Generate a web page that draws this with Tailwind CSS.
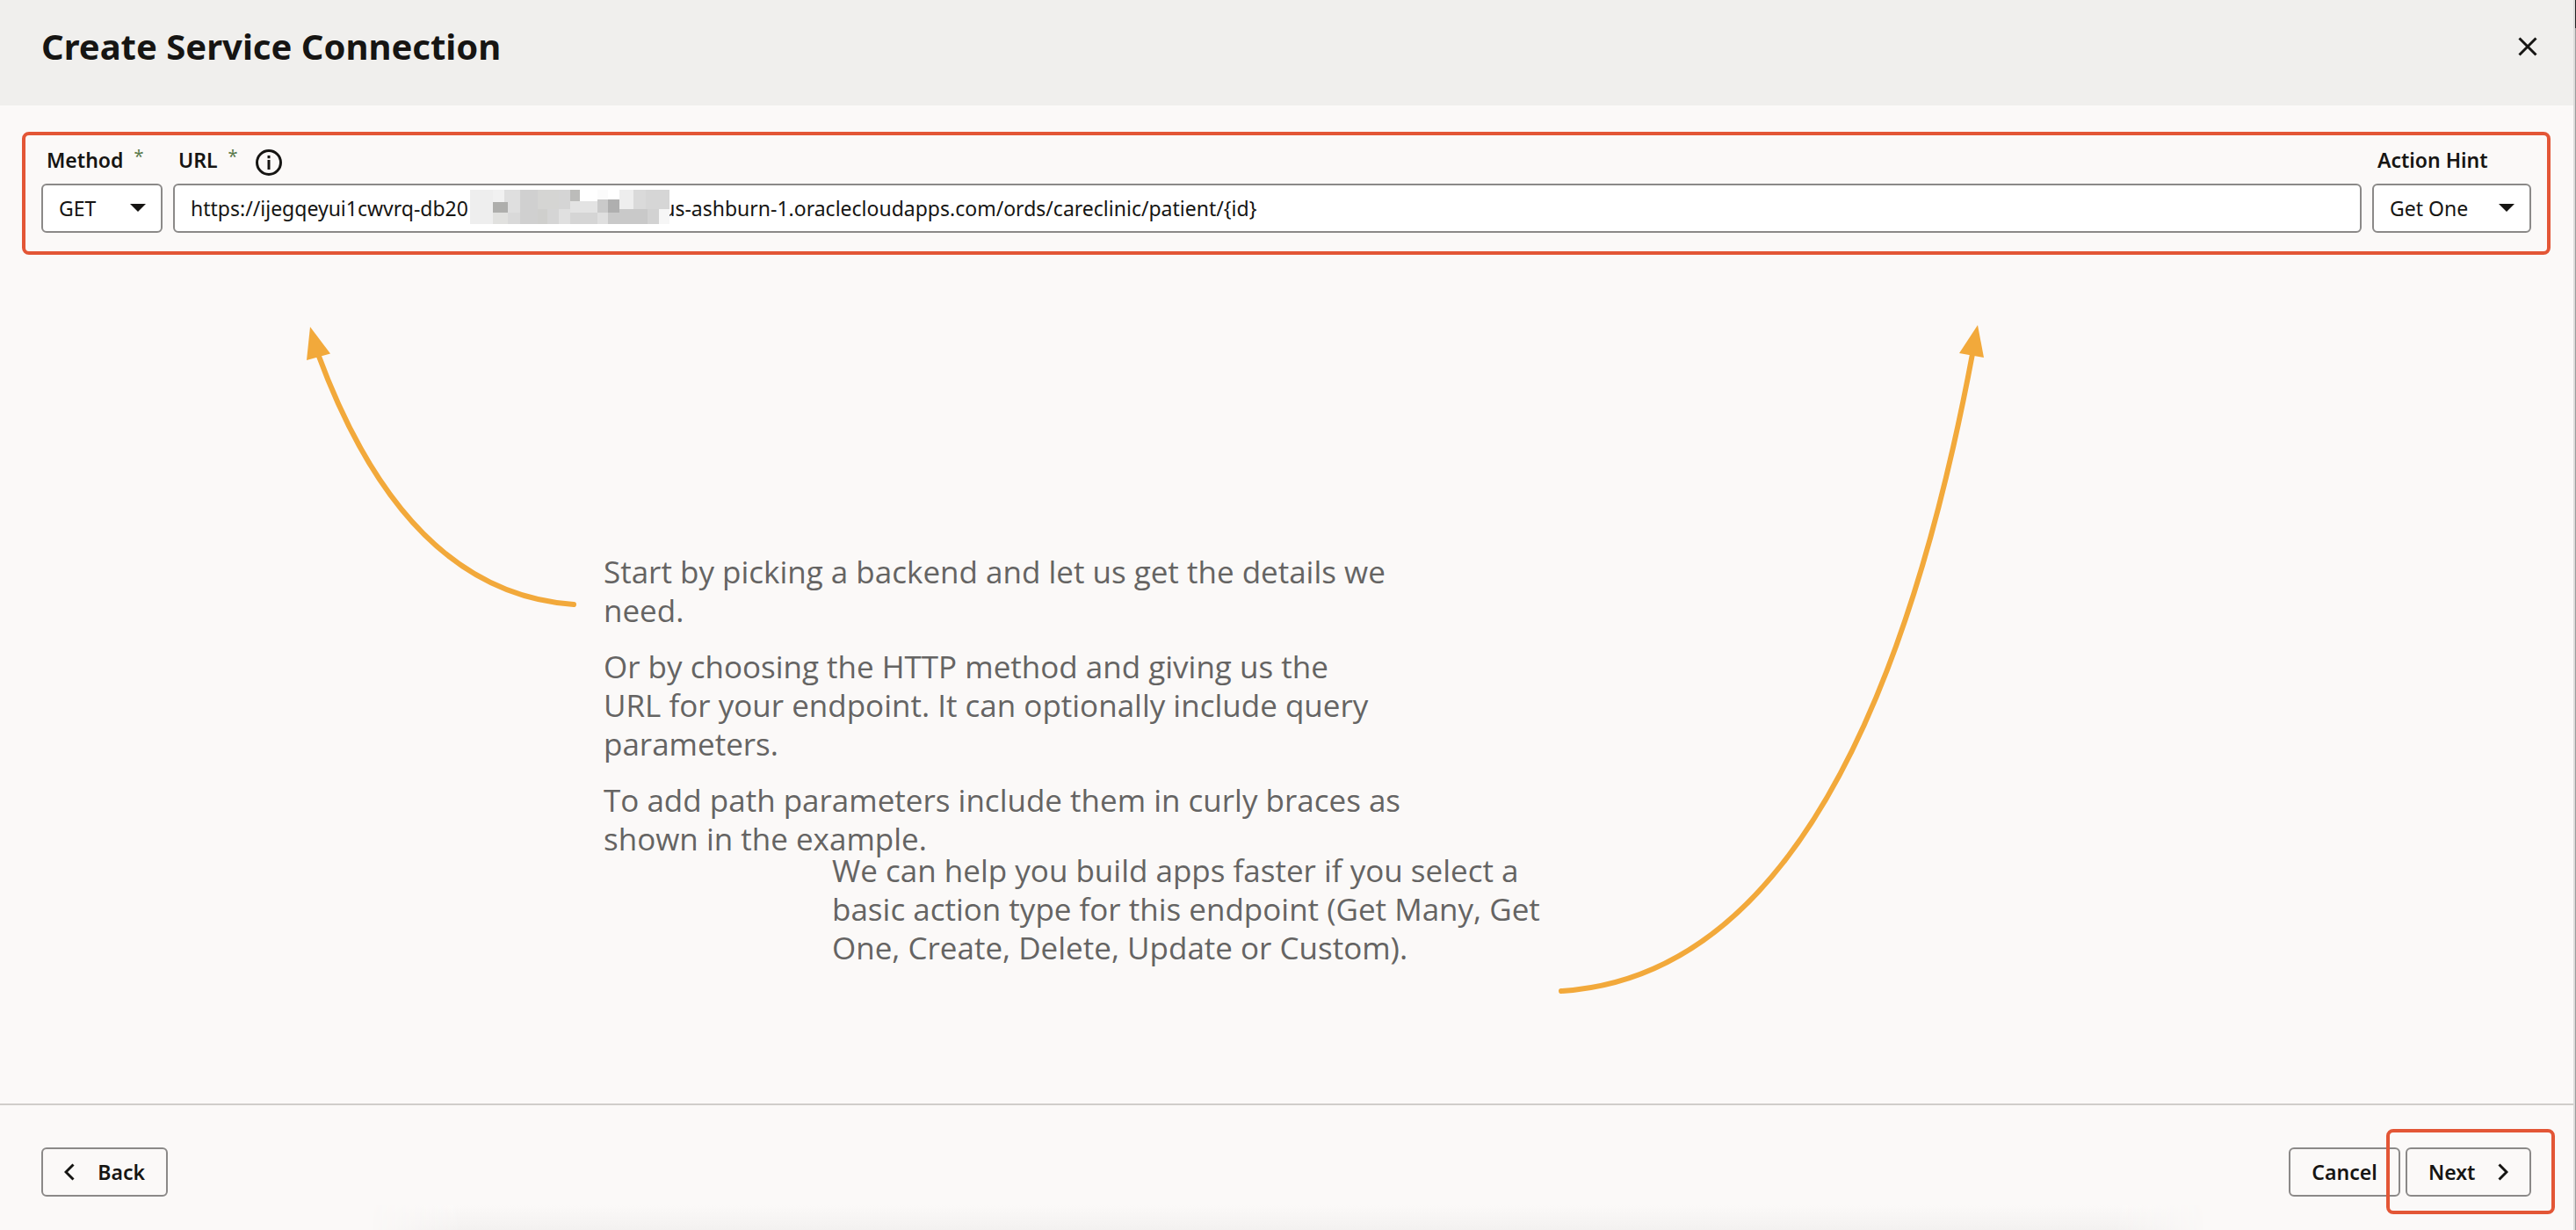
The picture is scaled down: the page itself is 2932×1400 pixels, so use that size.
<!DOCTYPE html>
<html lang="en">
<head>
<meta charset="utf-8">
<meta name="viewport" content="width=device-width, initial-scale=1">
<title>Create Service Connection</title>
<script src="https://cdn.jsdelivr.net/npm/@tailwindcss/browser@4"></script>
</head>
<body class="bg-[#fbf9f8] font-['Noto_Sans',sans-serif] text-[#161513]">
<div class="relative flex min-h-screen flex-col overflow-hidden">

  <header class="flex h-[120px] items-start justify-between bg-[#f0efed] pt-6 pr-[35px] pl-[47px]">
    <h1 class="text-[40px] leading-[58px] font-bold">Create Service Connection</h1>
    <button type="button" aria-label="Close" class="flex h-[58px] w-10 items-center justify-center">
      <svg class="size-6" viewBox="0 0 24 24" fill="none" stroke="currentColor" stroke-width="3"><path d="M2.5 2.5l19 19M21.500 2.500l-19 19"/></svg>
    </button>
  </header>

  <main class="relative flex-1">
    <!-- Endpoint form -->
    <form class="mt-[30px] mr-[29px] ml-[25px] flex gap-3 rounded-lg border-4 border-[#e35636] px-[18px] pt-3 pb-[21px]">
      <div class="w-[138px]">
        <div class="flex h-[43px] gap-3 pl-1.5">
          <label for="method" class="text-[23px] leading-8 font-semibold">Method</label>
          <span class="text-xl leading-6 text-[#5a7a4a]">*</span>
        </div>
        <div class="relative">
          <select id="method" class="h-14 w-full appearance-none rounded-md border-2 border-[#8b8988] bg-white pl-[18px] text-[23px]"><option>GET</option></select>
          <svg class="pointer-events-none absolute top-[23px] right-[19px] h-[9px] w-[18px]" viewBox="0 0 18 9" fill="currentColor"><path d="M0 0h18L9 9z"/></svg>
        </div>
      </div>
      <div class="flex-1">
        <div class="flex h-[43px] gap-3 pl-1.5">
          <label for="url" class="text-[23px] leading-8 font-semibold">URL</label>
          <span class="text-xl leading-6 text-[#5a7a4a]">*</span>
          <svg class="mt-1 ml-2 size-[30px]" viewBox="0 0 30 30" fill="none" stroke="currentColor" stroke-width="3"><circle cx="15" cy="15" r="13.500"/><path d="M15 12v11M15 7v3.200"/></svg>
        </div>
        <div class="relative">
          <input id="url" type="text" class="h-14 w-full rounded-md border-2 border-[#8b8988] bg-white px-[18px] text-[23px]" value="https://ijegqeyui1cwvrq-db20&nbsp;&nbsp;&nbsp;&nbsp;&nbsp;&nbsp;&nbsp;&nbsp;&nbsp;&nbsp;&nbsp;&nbsp;&nbsp;&nbsp;&nbsp;&nbsp;&nbsp;&nbsp;&nbsp;&nbsp;&nbsp;&nbsp;&nbsp;&nbsp;&nbsp;&nbsp;&nbsp;&nbsp;&nbsp;&nbsp;&nbsp;&nbsp;&nbsp;&nbsp;&nbsp;&nbsp;&nbsp;us-ashburn-1.oraclecloudapps.com/ords/careclinic/patient/{id}">
          <!-- Mosaic that hides the host's tenant name -->
          <svg class="pointer-events-none absolute top-[7px] left-[338px] h-[39px] w-[227px]" viewBox="0 0 227 39" shape-rendering="crispEdges">
            <path fill="#eeeeee" d="M0 0h39v39H0z"/><path fill="#f1f1f1" d="M26 0h13v14H26z"/>
            <path fill="#dfdfdf" d="M39 0h18v26H39z"/><path fill="#aeaeac" d="M26 14h17v12H26z"/>
            <path fill="#e1e1df" d="M26 26h17v13H26z"/><path fill="#d9d9d9" d="M43 26h14v13H43z"/>
            <path fill="#d0d0d0" d="M57 0h20v39H57z"/><path fill="#d5d5d3" d="M77 0h24v26H77z"/><path fill="#cfcfcd" d="M77 22h11v17H77z"/>
            <path fill="#d5d5d5" d="M88 22h13v17H88zM101 0h13v22h-13z"/><path fill="#e0e0e0" d="M101 22h13v17h-13z"/>
            <path fill="#bcbcba" d="M114 0h11v13h-11z"/><path fill="#fff" d="M125 0h20v13h-20zM157 0h13v11h-13z"/><path fill="#fbfbfb" d="M145 0h12v11h-12z"/>
            <path fill="#e3e3e3" d="M114 13h31v13h-31z"/><path fill="#d5d5d5" d="M114 26h31v13h-31z"/>
            <path fill="#cacaca" d="M145 11h12v15h-12z"/><path fill="#dfdfdf" d="M145 26h12v13h-12z"/>
            <path fill="#afafaf" d="M157 11h13v15h-13z"/><path fill="#eeeeee" d="M170 0h16v22h-16z"/>
            <path fill="#dadada" d="M186 0h14v22h-14z"/><path fill="#d6d6d6" d="M200 0h27v22h-27z"/>
            <path fill="#c9c9c9" d="M157 26h13v-4h32v17h-45z"/><path fill="#d2d2d2" d="M202 22h13v17h-13z"/><path fill="#f6f6f6" d="M215 22h12v17h-12z"/>
          </svg>
        </div>
      </div>
      <div class="w-[181px]">
        <div class="flex h-[43px] pl-1.5">
          <label for="hint" class="text-[23px] leading-8 font-semibold">Action Hint</label>
        </div>
        <div class="relative">
          <select id="hint" class="h-14 w-full appearance-none rounded-md border-2 border-[#8b8988] bg-white pl-[18px] text-[23px]"><option>Get One</option></select>
          <svg class="pointer-events-none absolute top-[23px] right-[19px] h-[9px] w-[18px]" viewBox="0 0 18 9" fill="currentColor"><path d="M0 0h18L9 9z"/></svg>
        </div>
      </div>
    </form>

    <!-- Guidance -->
    <div class="mt-[339px] ml-[687px] w-[910px] space-y-5 font-['Open_Sans',sans-serif] text-[35px] leading-[44px] text-[#656463]">
      <p>Start by picking a backend and let us get the details we need.</p>
      <p>Or by choosing the HTTP method and giving us the<br>URL for your endpoint. It can optionally include query parameters.</p>
      <p>To add path parameters include them in curly braces as shown in the example.</p>
    </div>
    <p class="-mt-2 ml-[947px] w-[830px] font-['Open_Sans',sans-serif] text-[35px] leading-[44px] text-[#656463]">We can help you build apps faster if you select a basic action type for this endpoint (Get Many, Get One, Create, Delete, Update or Custom).</p>

    <svg class="pointer-events-none absolute top-[240px] left-[340px] h-[340px] w-[330px] text-[#f2a93b]" viewBox="340 360 330 340" fill="none" stroke="currentColor" stroke-width="6" stroke-linecap="round">
      <path d="M362 403Q462 675 653 688"/><path fill="currentColor" stroke="none" d="M353 372l23 30.500-27 7.500z"/>
    </svg>
    <svg class="pointer-events-none absolute top-[240px] left-[1760px] h-[780px] w-[510px] text-[#f2a93b]" viewBox="1760 360 510 780" fill="none" stroke="currentColor" stroke-width="6" stroke-linecap="round">
      <path d="M2245 403Q2113 1107 1777 1128"/><path fill="currentColor" stroke="none" d="M2251 370l7 37-28-5z"/>
    </svg>
  </main>

  <footer class="relative flex h-36 items-start justify-between border-t-2 border-[#d0cdca] pt-12 pr-[51px] pl-[47px] text-[23px] font-semibold">
    <div class="absolute inset-x-[420px] bottom-0 h-7 bg-linear-to-t from-[#f3f1f0] to-[#fbf9f8] mask-x-from-95%"></div>
    <button type="button" class="flex h-14 w-36 items-center justify-between rounded-md border-2 border-[#8b8988] px-6">
      <svg class="h-5 w-3" viewBox="0 0 12 20" fill="none" stroke="currentColor" stroke-width="3"><path d="M10.500 1.500L2 10l8.500 8.500"/></svg>
      Back
    </button>
    <div class="flex gap-1.5">
      <button type="button" class="h-14 w-[127px] rounded-md border-2 border-[#8b8988]">Cancel</button>
      <div class="relative">
        <button type="button" class="flex h-14 w-[143px] items-center justify-between rounded-md border-2 border-[#8b8988] px-6">
          Next
          <svg class="h-5 w-3" viewBox="0 0 12 20" fill="none" stroke="currentColor" stroke-width="3"><path d="M1.500 1.500L10 10l-8.500 8.500"/></svg>
        </button>
        <span class="pointer-events-none absolute -top-[21px] -right-[27px] -bottom-5 -left-[22px] rounded-lg border-4 border-[#e35636]"></span>
      </div>
    </div>
  </footer>

  <!-- Sliver of the window behind the dialog -->
  <div class="absolute inset-y-0 right-0 flex w-[3px] flex-col border-l-2 border-[#dcdbda] bg-[#9b9b9b]"><span class="h-8 bg-[#222222]"></span></div>
</div>
</body>
</html>
